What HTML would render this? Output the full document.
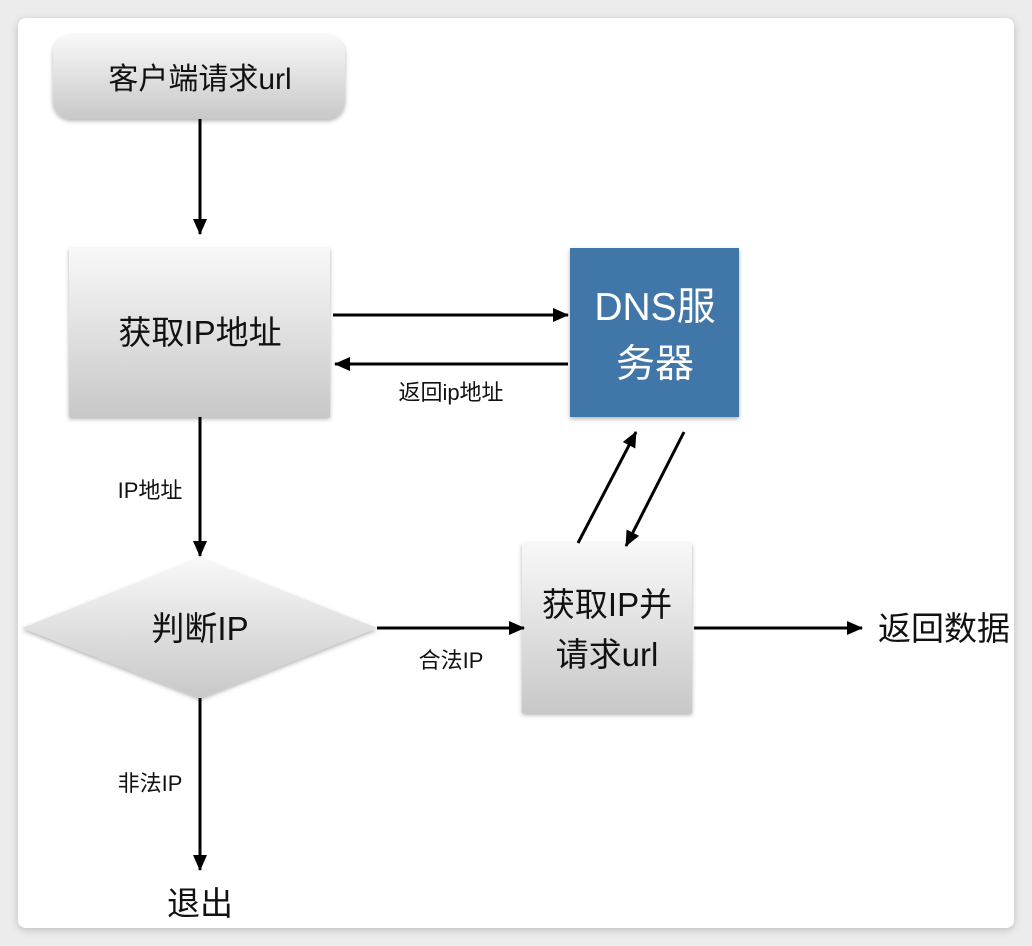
<!DOCTYPE html>
<html><head><meta charset="utf-8"><style>
html,body{margin:0;padding:0;width:1032px;height:946px;background:#ececec;overflow:hidden}
svg{display:block}
text{font-family:"Liberation Sans","Noto Sans CJK SC",sans-serif;fill:#111}
</style></head><body>
<svg width="1032" height="946" viewBox="0 0 1032 946">
<defs>
<linearGradient id="g" x1="0" y1="0" x2="0" y2="1"><stop offset="0" stop-color="#f8f8f8"/><stop offset="1" stop-color="#c8c8c8"/></linearGradient>
<filter id="s" x="-10%" y="-10%" width="120%" height="130%"><feDropShadow dx="0" dy="2" stdDeviation="2" flood-color="#000" flood-opacity="0.3"/></filter>
<filter id="cs" x="-5%" y="-5%" width="110%" height="110%"><feDropShadow dx="0" dy="2" stdDeviation="4" flood-color="#000" flood-opacity="0.2"/></filter>
<marker id="a" markerWidth="16" markerHeight="14" refX="15" refY="7" orient="auto" markerUnits="userSpaceOnUse"><path d="M0,0 L16,7 L0,14 z" fill="#000"/></marker>
</defs>
<rect x="18" y="18" width="996" height="910" rx="8" fill="#fff" filter="url(#cs)"/>
<rect x="53" y="35" width="292" height="84" rx="18" fill="url(#g)" filter="url(#s)"/>
<text x="200" y="89" font-size="30" text-anchor="middle">客户端请求url</text>
<rect x="69" y="248" width="261" height="169" fill="url(#g)" filter="url(#s)"/>
<text x="200" y="344" font-size="33" text-anchor="middle">获取IP地址</text>
<rect x="570" y="248" width="169" height="169" fill="#3f76a8" filter="url(#s)"/>
<text x="655" y="320" font-size="39" text-anchor="middle" style="fill:#fff">DNS服</text>
<text x="655" y="377" font-size="39" text-anchor="middle" style="fill:#fff">务器</text>
<polygon points="22,628 200,558 377,628 200,698" fill="url(#g)" filter="url(#s)"/>
<text x="200" y="640" font-size="33" text-anchor="middle">判断IP</text>
<rect x="522" y="543" width="170" height="170" fill="url(#g)" filter="url(#s)"/>
<text x="607" y="616" font-size="33" text-anchor="middle">获取IP并</text>
<text x="607" y="666" font-size="33" text-anchor="middle">请求url</text>
<g stroke="#000" stroke-width="3" fill="none" marker-end="url(#a)">
<line x1="200" y1="119" x2="200" y2="234"/>
<line x1="333" y1="315" x2="568" y2="315"/>
<line x1="568" y1="364" x2="335" y2="364"/>
<line x1="200" y1="417" x2="200" y2="556"/>
<line x1="377" y1="628" x2="524" y2="628"/>
<line x1="694" y1="628" x2="862" y2="628"/>
<line x1="578" y1="543" x2="636" y2="432"/>
<line x1="684" y1="432" x2="626" y2="546"/>
<line x1="200" y1="698" x2="200" y2="870"/>
</g>
<text x="451" y="400" font-size="22" text-anchor="middle">返回ip地址</text>
<text x="150" y="498" font-size="22" text-anchor="middle">IP地址</text>
<text x="451" y="668" font-size="22" text-anchor="middle">合法IP</text>
<text x="150" y="791" font-size="22" text-anchor="middle">非法IP</text>
<text x="944" y="640" font-size="33" text-anchor="middle">返回数据</text>
<text x="200" y="915" font-size="33" text-anchor="middle">退出</text>
</svg>
</body></html>
